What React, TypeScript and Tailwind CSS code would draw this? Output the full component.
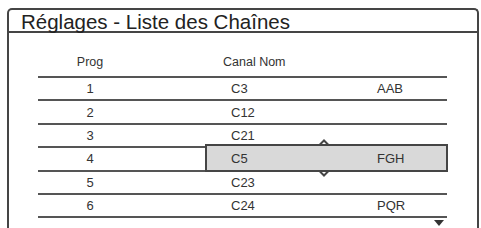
import React from 'react';

interface Channel {
  prog: number;
  canal: string;
  nom: string;
}

const channels: Channel[] = [
  { prog: 1, canal: 'C3', nom: 'AAB' },
  { prog: 2, canal: 'C12', nom: '' },
  { prog: 3, canal: 'C21', nom: '' },
  { prog: 4, canal: 'C5', nom: 'FGH' },
  { prog: 5, canal: 'C23', nom: '' },
  { prog: 6, canal: 'C24', nom: 'PQR' },
];

const SELECTED = 4;

const App: React.FC = () => {
  return (
    <div
      className="w-[481px] h-[228px] overflow-hidden bg-white pt-[8px] pl-[7px] pr-[2px] text-[#2a2a2a]"
      style={{ fontFamily: '"Liberation Sans", Arial, sans-serif' }}
    >
      <div className="h-[240px] border-2 border-b-0 border-[#454545] rounded-t-[5px]">
        <div className="h-[23px] border-b-2 border-[#454545] pl-[12px] pt-[1px] text-[20.5px] leading-[21px] text-[#222]">
          Réglages - Liste des Chaînes
        </div>

        <div className="relative ml-[29px] w-[409px]">
          <div className="h-[45px] flex items-end pb-[6px] border-b-2 border-[#555] text-[12.5px] leading-[15px] text-[#333]">
            <div className="w-[104px] text-center">Prog</div>
            <div className="pl-[81px]">Canal Nom</div>
          </div>

          {channels.map((ch) => (
            <div
              key={ch.prog}
              className="relative h-[23.4px] flex items-center border-b-2 border-[#555] text-[13px] leading-[15px] text-[#333]"
            >
              {ch.prog === SELECTED && (
                <div className="absolute left-[167px] right-[-1px] top-[-4px] bottom-[-2px] z-0 border-2 border-[#454545] bg-[#d9d9d9]">
                  <svg className="absolute left-[111px] top-[-7px]" width="12" height="7" viewBox="0 0 12 7">
                    <path d="M1 6.5 L6 1.5 L11 6.5" fill="none" stroke="#454545" strokeWidth="2" />
                  </svg>
                  <svg className="absolute left-[111px] bottom-[-7px]" width="12" height="7" viewBox="0 0 12 7">
                    <path d="M1 0.5 L6 5.5 L11 0.5" fill="none" stroke="#454545" strokeWidth="2" />
                  </svg>
                </div>
              )}
              <div className="relative z-10 w-[104px] text-center">{ch.prog}</div>
              <div className="relative z-10 w-[235px] pl-[89px]">{ch.canal}</div>
              <div className="relative z-10">{ch.nom}</div>
            </div>
          ))}

          <svg className="absolute left-[396px] top-[187px]" width="10" height="6" viewBox="0 0 10 6">
            <path d="M0 0 L10 0 L5 6 Z" fill="#333" />
          </svg>
        </div>
      </div>
    </div>
  );
};

export default App;
